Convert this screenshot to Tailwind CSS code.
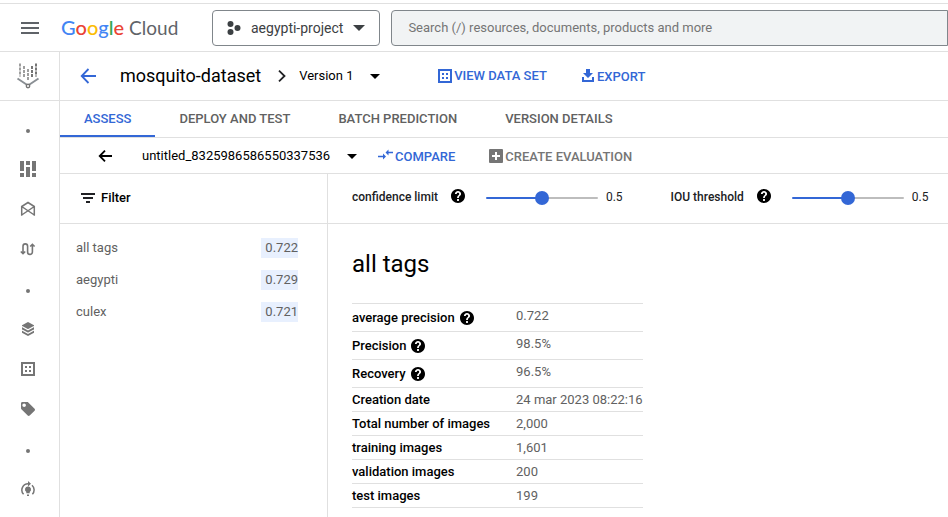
<!DOCTYPE html>
<html lang="en">
<head>
<meta charset="utf-8">
<meta name="viewport" content="width=device-width, initial-scale=1">
<title>mosquito-dataset – Google Cloud</title>
<script src="https://cdn.jsdelivr.net/npm/@tailwindcss/browser@4"></script>
</head>
<body class="flex min-h-screen flex-col bg-white font-[Roboto,'Liberation_Sans',sans-serif] text-[13px] leading-5 text-black">
<svg class="hidden" aria-hidden="true">
  <symbol id="caret" viewBox="0 0 10 5"><path d="M0 0h10L5 5z" fill="currentColor"/></symbol>
  <symbol id="help" viewBox="2 2 20 20"><path fill="currentColor" d="M12 2C6.480 2 2 6.480 2 12s4.480 10 10 10 10-4.480 10-10S17.520 2 12 2zm1.300 17h-2.600v-2.600h2.600V19zm2.070-7.750l-.9.920C13.450 12.900 13.300 13.500 13.300 15h-2.600v-.5c0-1.100.45-2.100 1.170-2.830l1.240-1.260c.37-.36.59-.86.59-1.410 0-1.100-.7-1.800-1.700-1.800s-1.800.8-1.800 1.800H7.600C7.600 6.700 9.500 4.700 12 4.700s4.400 1.900 4.400 4.300c0 .88-.4 1.680-1.030 2.250z"/></symbol>
  <symbol id="dataset" viewBox="0 0 14 14"><path fill="none" stroke="currentColor" stroke-width="2" d="M1 1h12v12H1z"/><path fill="currentColor" d="M4 4h2v2H4zM8 4h2v2H8zM4 8h2v2H4zM8 8h2v2H8z"/></symbol>
</svg>

<header class="mt-[3px] flex h-[49px] shrink-0 items-center border-y border-[#e0e0e0]">
  <button type="button" aria-label="Main menu" class="ml-[21px] text-[#5f6368]">
    <svg class="h-3 w-[18px]" viewBox="0 0 18 12"><path fill="currentColor" d="M0 0h18v2H0zM0 5h18v2H0zM0 10h18v2H0z"/></svg>
  </button>
  <a href="#" class="ml-[22px] w-[151px] shrink-0 font-[Lato,sans-serif] text-xl leading-6 font-medium whitespace-nowrap"><span class="text-[#4285f4]">G</span><span class="text-[#ea4335]">o</span><span class="text-[#fbbc04]">o</span><span class="text-[#4285f4]">g</span><span class="text-[#34a853]">l</span><span class="text-[#ea4335]">e</span> <span class="text-[19px] font-normal text-[#5f6368]">Cloud</span></a>
  <button type="button" class="flex h-9 shrink-0 items-center rounded border border-[#80868b] px-3.5 text-sm text-[#3c4043]">
    <svg class="mr-2.5 h-[14px] w-[14px]" viewBox="0 0 14 14"><g fill="currentColor"><circle cx="3.500" cy="3" r="3"/><circle cx="3.500" cy="11" r="3"/><circle cx="10.500" cy="7" r="3"/></g></svg>
    aegypti-project
    <svg class="ml-2.5 h-1.5 w-3"><use href="#caret"/></svg>
  </button>
  <input type="search" aria-label="Search" placeholder="Search (/) resources, documents, products and more" class="ml-[11px] h-9 min-w-0 flex-1 rounded-l border border-[#80868b] bg-[#f1f3f4] px-4 placeholder:text-[#757575]">
</header>

<div class="flex flex-1">
  <nav aria-label="Vertex AI" class="w-[60px] shrink-0 border-r border-[#e0e0e0] text-[#757575]">
    <a href="#" aria-label="Vertex AI" class="flex h-[49px] items-center border-b border-[#e0e0e0] pl-4">
      <svg class="h-[26px] w-6" viewBox="0 0 24 26" fill="none" stroke="currentColor">
        <g stroke-width="2" stroke-dasharray="3 1"><path d="M4 0.500v13M8 3v12M12 6v12" stroke="#9e9e9e"/><path d="M16 3v12M20 0.500v13"/></g>
        <path d="M1.500 15.500l9 6M22.500 15.500l-9 6" stroke="#8a8f94" stroke-width="2"/><circle cx="12" cy="23" r="1.700" stroke-width="1.400"/>
      </svg>
    </a>
    <ul class="mt-2.5 w-14 [&_a]:pb-1">
      <li class="flex h-10 items-center justify-center"><span class="size-1 rounded-full bg-current"></span></li>
      <li><a href="#" aria-label="Dashboard" class="flex h-10 items-center justify-center"><svg class="size-4" viewBox="0 0 16 16" fill="currentColor"><path d="M0 0h4v10H0zM0 12h4v4H0zM6 0h4v4H6zM6 6h4v10H6zM12 0h4v10h-4zM12 12h4v4h-4z"/></svg></a></li>
      <li><a href="#" aria-label="Workbench" class="flex h-10 items-center justify-center"><svg class="size-4" viewBox="0 0 16 16" fill="none" stroke="currentColor" stroke-width="1.500"><path d="M1.700 14.800V5.500L8 1.500l6.300 4v9.300M1.700 5.500L14.300 14M14.300 5.500L1.700 14"/></svg></a></li>
      <li><a href="#" aria-label="Pipelines" class="flex h-10 items-center justify-center"><svg class="size-4" viewBox="0 0 16 16" fill="none" stroke="currentColor" stroke-width="1.600"><path d="M3 12.500V5.200a2.300 2.300 0 0 1 4.600 0v5.800a2.400 2.400 0 0 0 4.800 0V4M.8 10.500L3 12.700l2.200-2.200M10.200 5.500l2.200-2.200 2.200 2.200"/></svg></a></li>
      <li class="flex h-10 items-center justify-center"><span class="size-1 rounded-full bg-current"></span></li>
      <li><a href="#" aria-label="Feature Store" class="flex h-10 items-center justify-center"><svg class="size-4" viewBox="0 0 16 16"><path fill="currentColor" d="M8 1l6 3.300v7.400L8 15l-6-3.300V4.300z"/><path fill="none" stroke="#fff" stroke-width="1.200" d="M2 5.500l6 3.200 6-3.200M2 9l6 3.200L14 9"/></svg></a></li>
      <li><a href="#" aria-label="Datasets" class="flex h-10 items-center justify-center"><svg class="size-3.5"><use href="#dataset"/></svg></a></li>
      <li><a href="#" aria-label="Labeling tasks" class="flex h-10 items-center justify-center"><svg class="size-3.5" viewBox="2 2 20 20" fill="currentColor"><path d="M21.410 11.580l-9-9C12.050 2.220 11.550 2 11 2H4c-1.100 0-2 .9-2 2v7c0 .55.22 1.050.59 1.420l9 9c.36.36.86.58 1.410.58.55 0 1.050-.22 1.410-.59l7-7c.37-.36.59-.86.59-1.410 0-.55-.23-1.060-.59-1.420zM6.500 9C5.120 9 4 7.880 4 6.500S5.120 4 6.500 4 9 5.120 9 6.500 7.880 9 6.500 9z"/></svg></a></li>
      <li class="flex h-10 items-center justify-center"><span class="size-1 rounded-full bg-current"></span></li>
      <li><a href="#" aria-label="Training" class="flex h-10 items-center justify-center"><svg class="size-4" viewBox="0 0 16 16" fill="none" stroke="currentColor" stroke-width="1.500"><path d="M3.600 13.300A6.300 6.300 0 0 1 8.500 2.700M12 4.200a6.300 6.300 0 0 1 .4 9"/><path d="M8 0l3 2.700L8 5.400zM8 5.500a3 3 0 0 1 1.700 5.500v1.300H6.300V11A3 3 0 0 1 8 5.500zM7 13.500h2V15H7z" fill="currentColor" stroke="none"/></svg></a></li>
    </ul>
  </nav>

  <main class="flex min-w-0 flex-1 flex-col">
    <div class="flex h-[49px] shrink-0 items-center border-b border-[#e0e0e0] pl-5 whitespace-nowrap">
      <a href="#" aria-label="Back" class="mr-6 text-[#3367d6]"><svg class="size-4" viewBox="0 0 16 16" fill="none" stroke="currentColor" stroke-width="1.800"><path d="M16 8H2M8.500 1L1.700 8l6.800 7"/></svg></a>
      <h1 class="text-lg">mosquito-dataset</h1>
      <svg class="mx-3 h-3 w-[14px]" viewBox="0 0 14 12" fill="none" stroke="#202124" stroke-width="1.800"><path d="M6 0.700L11.500 6 6 11.300"/></svg>
      <div class="relative">
        <select aria-label="Version" class="w-[81px] appearance-none"><option>Version 1</option></select>
        <svg class="pointer-events-none absolute top-2 right-0 h-[5px] w-2.5"><use href="#caret"/></svg>
      </div>
      <button type="button" class="ml-[58px] flex items-center gap-0.5 font-medium text-[#3367d6]"><svg class="size-3.5"><use href="#dataset"/></svg>VIEW DATA SET</button>
      <button type="button" class="ml-[35px] flex items-start gap-[3px] pt-0.5 font-medium text-[#3367d6]"><svg class="mt-0.5 h-[13px] w-3" viewBox="0 0 12 13" fill="currentColor"><path d="M4 0h4v4h3L6 9 1 4h3zM0 8h2v3h8V8h2v5H0z"/></svg>EXPORT</button>
    </div>

    <nav aria-label="Model tabs" class="flex h-[37px] shrink-0 border-b border-[#e0e0e0] font-medium whitespace-nowrap text-[#616161]">
      <a href="#" aria-current="page" class="flex items-center border-b-2 border-[#3367d6] px-6 pt-0.5 text-[#3367d6]">ASSESS</a>
      <a href="#" class="flex items-center px-6">DEPLOY AND TEST</a>
      <a href="#" class="flex items-center px-6">BATCH PREDICTION</a>
      <a href="#" class="flex items-center px-6">VERSION DETAILS</a>
    </nav>

    <div class="flex h-9 shrink-0 items-center border-b border-[#e0e0e0] pl-[38px] whitespace-nowrap">
      <button type="button" aria-label="Previous evaluation" class="mr-[30px]"><svg class="h-3 w-3.5" viewBox="0 0 14 12" fill="none" stroke="currentColor" stroke-width="1.800"><path d="M14 6H2M7 0.700L1.700 6 7 11.300"/></svg></button>
      <div class="relative">
        <select aria-label="Evaluation" class="w-[215px] appearance-none"><option>untitled_8325986586550337536</option></select>
        <svg class="pointer-events-none absolute top-2 right-0 h-[5px] w-2.5"><use href="#caret"/></svg>
      </div>
      <button type="button" class="ml-[21px] flex items-start gap-0.5 pt-0.5 font-medium text-[#3367d6]"><svg class="mt-0.5 h-3 w-[15px]" viewBox="0 0 15 12" fill="none" stroke="currentColor" stroke-width="1.400"><path d="M0 7.500h6M15 3.500H9"/><path d="M5 4.500v6l3-3zM10.500 0.500v6l-3-3z" fill="currentColor" stroke="none"/></svg>COMPARE</button>
      <button type="button" class="ml-[34px] flex items-start gap-0.5 pt-0.5 font-medium text-[#757575]"><svg class="mt-0.5 size-3.5" viewBox="0 0 14 14"><rect width="14" height="14" rx="1" fill="currentColor"/><path d="M7 3v8M3 7h8" stroke="#fff" stroke-width="2"/></svg>CREATE EVALUATION</button>
    </div>

    <div class="grid flex-1 grid-cols-[268px_minmax(0,1fr)] grid-rows-[50px_1fr]">
      <div class="flex items-center border-r border-b border-[#e0e0e0] pb-0.5 pl-[21px]">
        <button type="button" class="flex items-center gap-1.5 font-medium"><svg class="h-2.5 w-3.5" viewBox="0 0 14 10" fill="#202124"><path d="M0 0h14v2H0zM2 4h10v2H2zM5 8h4v2H5z"/></svg>Filter</button>
      </div>
      <div class="flex items-center border-b border-[#e0e0e0] pb-0.5 pl-6 text-xs whitespace-nowrap text-[#202124]">
        <label for="confidence" class="pb-0.5 font-medium">confidence limit</label>
        <button type="button" aria-label="About confidence limit" class="mr-[21px] ml-[13px] pb-1 text-black"><svg class="size-3.5"><use href="#help"/></svg></button>
        <input id="confidence" type="range" min="0" max="1" step="0.1" value="0.5" class="mr-2 h-3.5 w-28 appearance-none bg-transparent [&::-webkit-slider-runnable-track]:h-0.5 [&::-webkit-slider-runnable-track]:rounded [&::-webkit-slider-runnable-track]:bg-linear-[90deg,#3367d6_50%,#bdbdbd_50%] [&::-webkit-slider-thumb]:-mt-1.5 [&::-webkit-slider-thumb]:size-3.5 [&::-webkit-slider-thumb]:appearance-none [&::-webkit-slider-thumb]:rounded-full [&::-webkit-slider-thumb]:bg-[#3367d6]">
        <output for="confidence" class="pb-0.5">0.5</output>
        <label for="iou" class="ml-12 pb-0.5 font-medium">IOU threshold</label>
        <button type="button" aria-label="About IOU threshold" class="mr-[21px] ml-[13px] pb-1 text-black"><svg class="size-3.5"><use href="#help"/></svg></button>
        <input id="iou" type="range" min="0" max="1" step="0.1" value="0.5" class="mr-2 h-3.5 w-28 appearance-none bg-transparent [&::-webkit-slider-runnable-track]:h-0.5 [&::-webkit-slider-runnable-track]:rounded [&::-webkit-slider-runnable-track]:bg-linear-[90deg,#3367d6_50%,#bdbdbd_50%] [&::-webkit-slider-thumb]:-mt-1.5 [&::-webkit-slider-thumb]:size-3.5 [&::-webkit-slider-thumb]:appearance-none [&::-webkit-slider-thumb]:rounded-full [&::-webkit-slider-thumb]:bg-[#3367d6]">
        <output for="iou" class="pb-0.5">0.5</output>
      </div>

      <ul class="border-r border-[#e0e0e0] pt-2 text-[#616161]">
        <li><a href="#" class="flex h-8 items-center justify-between pr-[29px] pl-4">all tags<span class="bg-[#e8f0fe] pl-1">0.722</span></a></li>
        <li><a href="#" class="flex h-8 items-center justify-between pr-[29px] pl-4">aegypti<span class="bg-[#e8f0fe] pl-1">0.729</span></a></li>
        <li><a href="#" class="flex h-8 items-center justify-between pr-[29px] pl-4">culex<span class="bg-[#e8f0fe] pl-1">0.721</span></a></li>
      </ul>

      <section class="pt-6 pl-6">
        <h2 class="text-2xl">all tags</h2>
        <table class="mt-[23px] border-t border-[#e0e0e0] text-left whitespace-nowrap [&_td]:pt-0.5 [&_td]:align-top [&_td]:text-[#616161] [&_th]:pr-[26px] [&_th]:font-medium [&_tr]:border-b [&_tr]:border-[#e0e0e0]">
          <tbody>
            <tr class="h-7"><th scope="row"><span class="flex items-center gap-[5px]">average precision<svg class="size-3.5"><use href="#help"/></svg></span></th><td>0.722</td></tr>
            <tr class="h-7"><th scope="row"><span class="flex items-center gap-[5px]">Precision<svg class="size-3.5"><use href="#help"/></svg></span></th><td>98.5%</td></tr>
            <tr class="h-7"><th scope="row"><span class="flex items-center gap-[5px]">Recovery<svg class="size-3.5"><use href="#help"/></svg></span></th><td>96.5%</td></tr>
            <tr class="h-6"><th scope="row">Creation date</th><td>24 mar 2023 08:22:16</td></tr>
            <tr class="h-6"><th scope="row">Total number of images</th><td>2,000</td></tr>
            <tr class="h-6"><th scope="row">training images</th><td>1,601</td></tr>
            <tr class="h-6"><th scope="row">validation images</th><td>200</td></tr>
            <tr class="h-6"><th scope="row">test images</th><td>199</td></tr>
          </tbody>
        </table>
      </section>
    </div>
  </main>
</div>
</body>
</html>
